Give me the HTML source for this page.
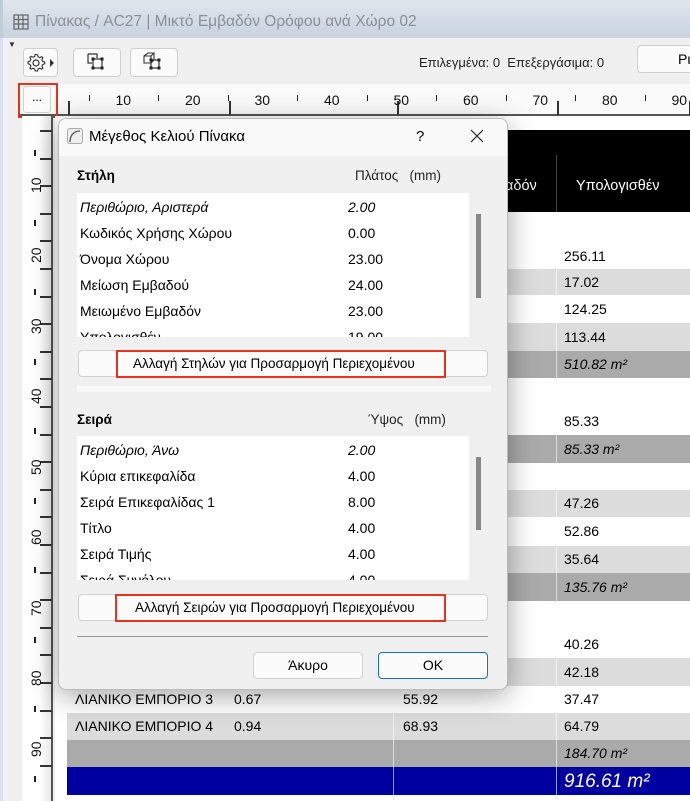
<!DOCTYPE html>
<html style="overflow:hidden;width:690px;height:801px"><head><meta charset="utf-8"><style>
*{box-sizing:border-box;margin:0;padding:0}
body{width:690px;height:801px;overflow:hidden;position:relative;background:#f0f0f0;font-family:"Liberation Sans","DejaVu Sans",sans-serif;font-size:14px;color:#000}
.a{position:absolute}
.t{position:absolute;white-space:nowrap}
</style></head><body>
<!-- title bar -->
<div class="a" style="left:0;top:0;width:690px;height:38px;background:linear-gradient(#dfe6ee,#c8d3de);border-left:3px solid #c0ccd8"></div>
<svg class="a" style="left:13px;top:14px" width="16" height="16"><g fill="none" stroke="#666" stroke-width="1.2"><rect x="1" y="1" width="14" height="14"/><path d="M1 5.5H15M1 10H15M5.5 1V15M10 1V15"/></g></svg>
<div class="t" style="left:35px;top:13px;font-size:15.5px;color:#8a8f95">Πίνακας / AC27 | Μικτό Εμβαδόν Ορόφου ανά Χώρο 02</div>
<div class="a" style="left:0;top:38px;width:3px;height:763px;background:#d6e2ee"></div>
<div class="t" style="left:8px;top:40px;font-size:8px;color:#333">▼</div>
<!-- toolbar -->
<div class="a" style="left:23px;top:48px;width:35px;height:29px;background:#fbfbfb;border:1px solid #cfcfcf;border-radius:4px"></div>
<svg class="a" style="left:26px;top:52px" width="30" height="22"><circle cx="10" cy="11" r="3" fill="none" stroke="#333" stroke-width="1.2"/><path d="M10 2.5l1.6.3.5 2 1.8.9 1.8-1 1.2 1.2-1 1.8.8 1.8 2 .5v1.8l-2 .6-.8 1.8 1 1.8-1.2 1.2-1.8-1-1.800.8-.5 2H9.2l-.5-2-1.8-.8-1.8 1-1.2-1.2 1-1.8-.8-1.8-2-.6V9.6l2-.5.8-1.8-1-1.8 1.2-1.2 1.8 1 1.8-.9.5-2z" fill="none" stroke="#333" stroke-width="1.1"/><path d="M24 7l4 4-4 4z" fill="#333"/></svg>
<div class="a" style="left:73px;top:48px;width:48px;height:29px;background:#fbfbfb;border:1px solid #cfcfcf;border-radius:4px"></div>
<svg class="a" style="left:85px;top:51px" width="24" height="22"><path d="M3 3h9v4M3 3v9h4" fill="none" stroke="#333" stroke-width="1.2"/><rect x="8" y="8" width="9" height="9" fill="none" stroke="#333" stroke-width="1.2"/><g fill="#222"><rect x="6.5" y="6.5" width="3" height="3"/><rect x="15.5" y="6.5" width="3" height="3"/><rect x="6.5" y="15.5" width="3" height="3"/><rect x="15.5" y="15.5" width="3" height="3"/></g></svg>
<div class="a" style="left:130px;top:48px;width:48px;height:29px;background:#fbfbfb;border:1px solid #cfcfcf;border-radius:4px"></div>
<svg class="a" style="left:141px;top:51px" width="26" height="22"><path d="M3 5l4-3h6v7l-3 3H3z M3 5h7v7 M10 5l3-3" fill="none" stroke="#333" stroke-width="1.1"/><rect x="10" y="9" width="8" height="8" fill="none" stroke="#333" stroke-width="1.2"/><g fill="#222"><rect x="8.5" y="7.5" width="3" height="3"/><rect x="16.5" y="7.5" width="3" height="3"/><rect x="8.5" y="15.5" width="3" height="3"/><rect x="16.5" y="15.5" width="3" height="3"/></g></svg>
<div class="t" style="left:419px;top:55px;font-size:13px;color:#222">Επιλεγμένα: 0&nbsp; Επεξεργάσιμα: 0</div>
<div class="a" style="left:637px;top:45px;width:60px;height:28px;background:#fbfbfb;border:1px solid #cfcfcf;border-radius:4px"></div>
<div class="t" style="left:678px;top:51px;font-size:14px">Ρι</div>
<!-- horizontal ruler -->
<div class="a" style="left:18px;top:84px;width:672px;height:32px;background:#fafafa;border-bottom:2px solid #555"></div>
<div class="a" style="left:23px;top:86px;width:28px;height:27px;background:#fbfbfb;border:1px solid #cfcfcf;border-radius:3px"></div>
<div class="t" style="left:32px;top:90px;font-size:12px">...</div>
<div class="a" style="left:18px;top:83px;width:40px;height:35px;border:2px solid #e8321e"></div>
<div id="hr"></div>
<!-- vertical ruler -->
<div class="a" style="left:22px;top:116px;width:31px;height:685px;background:linear-gradient(90deg,#fff,#fff 60%,#e8e8e8);border-right:2px solid #555"></div>
<div id="vr"></div>
<!-- table area -->
<div class="a" style="left:55px;top:116px;width:635px;height:685px;background:#fff"></div>
<div class="a" style="left:67px;top:130px;width:623px;height:82px;background:#000"></div>
<div class="a" style="left:556px;top:155px;width:1px;height:57px;background:#444"></div>
<div class="t" style="left:576px;top:178px;color:#fff;font-size:14.5px">Υπολογισθέν</div>
<div class="t" style="left:505px;top:178px;color:#fff;font-size:14.5px">αδόν</div>
<div id="rows"></div>
<!-- dialog -->
<div class="a" style="left:58px;top:118px;width:450px;height:572px;background:#f0f0f0;border:1px solid #bbb;border-radius:8px;box-shadow:0 6px 28px rgba(0,0,0,.35);overflow:hidden">
 <div class="a" style="left:0;top:0;width:450px;height:37px;background:#f9f9f9"></div>
</div>
<div class="a" style="left:67px;top:128px;width:16px;height:16px;border:1px solid #aaa;border-radius:3px;background:#eee"></div>
<svg class="a" style="left:67px;top:128px" width="16" height="16"><path d="M3 14C3 7 7 3 13 3" fill="none" stroke="#555" stroke-width="1.3"/></svg>
<div class="t" style="left:89px;top:128px;font-size:15px">Μέγεθος Κελιού Πίνακα</div>
<div class="t" style="left:416px;top:128px;font-size:15px">?</div>
<svg class="a" style="left:470px;top:129px" width="14" height="14"><path d="M1 1L13 13M13 1L1 13" stroke="#222" stroke-width="1.2"/></svg>
<div class="t" style="left:77px;top:168px;font-weight:bold;font-size:13.5px">Στήλη</div>
<div class="t" style="left:355px;top:168px;font-size:13.5px;color:#222">Πλάτος&nbsp;&nbsp; (mm)</div>
<div class="a" style="left:77px;top:193px;width:392px;height:144px;background:#fff;overflow:hidden;font-size:14px">
 <div class="t" style="left:3px;top:6px;font-style:italic">Περιθώριο, Αριστερά</div><div class="t" style="left:271px;top:6px;font-style:italic">2.00</div>
 <div class="t" style="left:3px;top:32px">Κωδικός Χρήσης Χώρου</div><div class="t" style="left:271px;top:32px">0.00</div>
 <div class="t" style="left:3px;top:58px">Όνομα Χώρου</div><div class="t" style="left:271px;top:58px">23.00</div>
 <div class="t" style="left:3px;top:84px">Μείωση Εμβαδού</div><div class="t" style="left:271px;top:84px">24.00</div>
 <div class="t" style="left:3px;top:110px">Μειωμένο Εμβαδόν</div><div class="t" style="left:271px;top:110px">23.00</div>
 <div class="t" style="left:3px;top:136px">Υπολογισθέν</div><div class="t" style="left:271px;top:136px">19.00</div>
</div>
<div class="a" style="left:476px;top:214px;width:5px;height:84px;background:#888"></div>
<div class="a" style="left:78px;top:350px;width:410px;height:27px;background:#fbfbfb;border:1px solid #d0d0d0;border-radius:4px"></div>
<div class="a" style="left:116px;top:350px;width:330px;height:28px;border:2px solid #e8321e"></div>
<div class="t" style="left:133px;top:356px;font-size:13.5px">Αλλαγή Στηλών για Προσαρμογή Περιεχομένου</div>
<div class="a" style="left:77px;top:386px;width:414px;height:6px;background:#f8f8f8"></div>
<div class="t" style="left:77px;top:412px;font-weight:bold;font-size:13.5px">Σειρά</div>
<div class="t" style="left:368px;top:412px;font-size:13.5px;color:#222">Ύψος&nbsp;&nbsp; (mm)</div>
<div class="a" style="left:77px;top:436px;width:392px;height:144px;background:#fff;overflow:hidden;font-size:14px">
 <div class="t" style="left:3px;top:6px;font-style:italic">Περιθώριο, Άνω</div><div class="t" style="left:271px;top:6px;font-style:italic">2.00</div>
 <div class="t" style="left:3px;top:32px">Κύρια επικεφαλίδα</div><div class="t" style="left:271px;top:32px">4.00</div>
 <div class="t" style="left:3px;top:58px">Σειρά Επικεφαλίδας 1</div><div class="t" style="left:271px;top:58px">8.00</div>
 <div class="t" style="left:3px;top:84px">Τίτλο</div><div class="t" style="left:271px;top:84px">4.00</div>
 <div class="t" style="left:3px;top:110px">Σειρά Τιμής</div><div class="t" style="left:271px;top:110px">4.00</div>
 <div class="t" style="left:3px;top:136px">Σειρά Συνόλου</div><div class="t" style="left:271px;top:136px">4.00</div>
</div>
<div class="a" style="left:476px;top:457px;width:5px;height:73px;background:#888"></div>
<div class="a" style="left:78px;top:594px;width:410px;height:27px;background:#fbfbfb;border:1px solid #d0d0d0;border-radius:4px"></div>
<div class="a" style="left:115px;top:594px;width:331px;height:28px;border:2px solid #e8321e"></div>
<div class="t" style="left:135px;top:600px;font-size:13.5px">Αλλαγή Σειρών για Προσαρμογή Περιεχομένου</div>
<div class="a" style="left:77px;top:636px;width:411px;height:1px;background:#999"></div>
<div class="a" style="left:253px;top:652px;width:110px;height:27px;background:#fbfbfb;border:1px solid #d0d0d0;border-radius:4px;text-align:center;line-height:25px">Άκυρο</div>
<div class="a" style="left:378px;top:652px;width:110px;height:27px;background:#fbfbfb;border:1px solid #1a6fc4;border-radius:4px;text-align:center;line-height:25px">OK</div>
<script>
var h='';
[89,158,228,297,367,436,506,575,645].forEach(function(x){h+='<div class="a" style="left:'+x+'px;top:95px;width:1px;height:6px;background:#222"></div>';});
[68,229,397,557,689].forEach(function(x){h+='<div class="a" style="left:'+x+'px;top:101px;width:2px;height:14px;background:#333"></div>';});
for(var i=1;i<=9;i++){h+='<div class="t" style="left:'+(54+i*69.5-8)+'px;top:92px;font-size:14px;color:#111">'+(i*10)+'</div>';}
document.getElementById('hr').innerHTML=h;
var v='';
for(var y=130;y<790;y+=27.6){v+='<div class="a" style="left:40px;top:'+Math.round(y)+'px;width:12px;height:2px;background:#333"></div>';}
for(var k=0;k<10;k++){var y0=150+k*69.5;if(y0<790)v+='<div class="a" style="left:34px;top:'+Math.round(y0)+'px;width:2px;height:6px;background:#222"></div>';}
for(var j=1;j<=9;j++){var yc=112+j*70.5;v+='<div class="t" style="left:26px;top:'+Math.round(yc-8)+'px;font-size:14px;transform:rotate(-90deg);transform-origin:10px 8px;width:20px;color:#111">'+(j*10)+'</div>';}
document.getElementById('vr').innerHTML=v;
var R=[[243,269,'#fff','256.11'],[269,295,'#dcdcdc','17.02'],[295,323,'#fff','124.25'],[323,351,'#dcdcdc','113.44'],[351,378,'#aaa','<i>510.82 m²</i>'],[407,435,'#fff','85.33'],[435,463,'#aaa','<i>85.33 m²</i>'],[490,517,'#dcdcdc','47.26'],[517,546,'#fff','52.86'],[546,573,'#dcdcdc','35.64'],[573,601,'#aaa','<i>135.76 m²</i>'],[630,658,'#fff','40.26'],[658,686,'#dcdcdc','42.18'],[686,713,'#fff','37.47','ΛΙΑΝΙΚΟ ΕΜΠΟΡΙΟ 3','0.67','55.92'],[713,740,'#dcdcdc','64.79','ΛΙΑΝΙΚΟ ΕΜΠΟΡΙΟ 4','0.94','68.93'],[740,767,'#aaa','<i>184.70 m²</i>'],[767,795,'#0000a0','<i style="font-size:19px;color:#fff">916.61 m²</i>']];
var r='';
R.forEach(function(a){var hh=a[1]-a[0];var lc=a[2]=='#fff'?'transparent':'rgba(255,255,255,.6)';
r+='<div class="a" style="left:67px;top:'+a[0]+'px;width:623px;height:'+hh+'px;background:'+a[2]+'"></div>';
r+='<div class="a" style="left:556px;top:'+a[0]+'px;width:1px;height:'+hh+'px;background:'+lc+'"></div><div class="a" style="left:393px;top:'+a[0]+'px;width:1px;height:'+hh+'px;background:'+lc+'"></div>';
r+='<div class="t" style="left:564px;top:'+(a[0]+(hh-17)/2)+'px;font-size:14px;line-height:17px">'+a[3]+'</div>';
if(a[4]){r+='<div class="t" style="left:75px;top:'+(a[0]+5)+'px">'+a[4]+'</div><div class="t" style="left:234px;top:'+(a[0]+5)+'px">'+a[5]+'</div><div class="t" style="left:403px;top:'+(a[0]+5)+'px">'+a[6]+'</div>';}
});
document.getElementById('rows').innerHTML=r;
</script>
</body></html>
